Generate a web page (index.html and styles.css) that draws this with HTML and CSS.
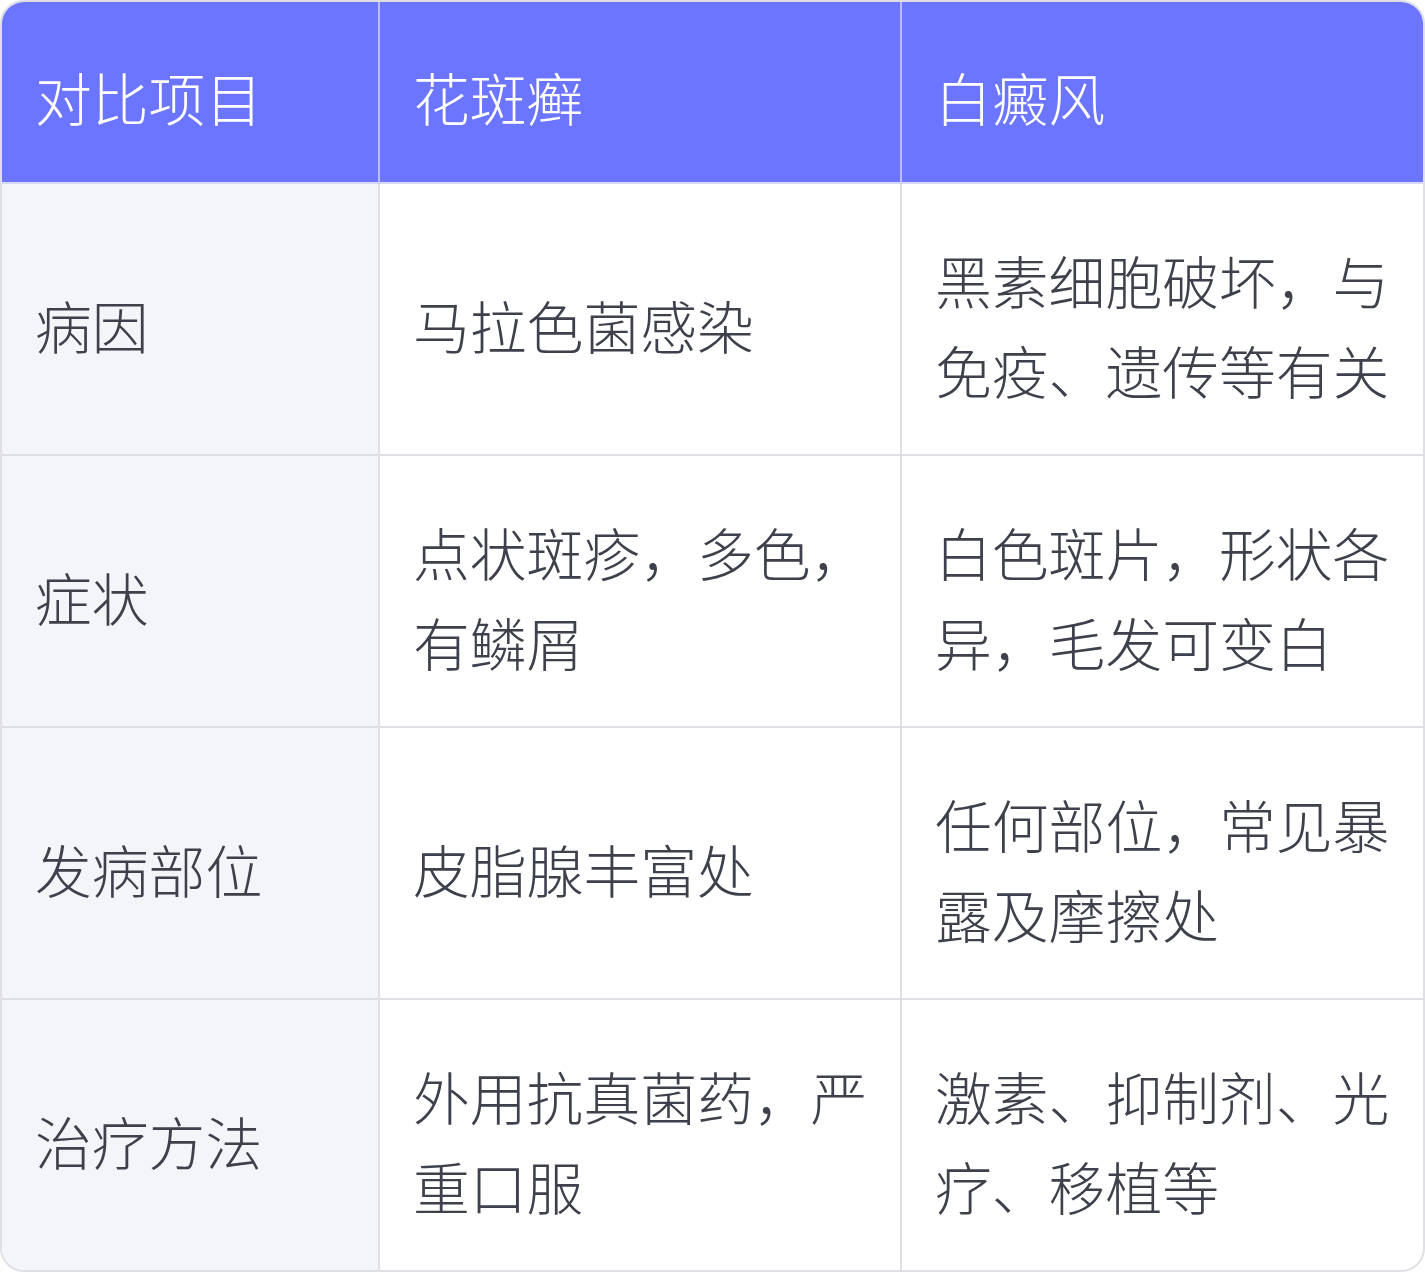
FILE: index.html
```html
<!DOCTYPE html>
<html lang="zh-CN">
<head>
<meta charset="utf-8">
<link rel="stylesheet" href="styles.css">
</head>
<body>
<table class="cmp">
  <colgroup>
    <col class="c1"><col class="c2"><col class="c3">
  </colgroup>
  <thead>
    <tr><th>对比项目</th><th>花斑癣</th><th>白癜风</th></tr>
  </thead>
  <tbody>
    <tr><td class="key">病因</td><td>马拉色菌感染</td><td>黑素细胞破坏，与免疫、遗传等有关</td></tr>
    <tr><td class="key">症状</td><td>点状斑疹，多色，有鳞屑</td><td>白色斑片，形状各异，毛发可变白</td></tr>
    <tr><td class="key">发病部位</td><td>皮脂腺丰富处</td><td>任何部位，常见暴露及摩擦处</td></tr>
    <tr><td class="key">治疗方法</td><td>外用抗真菌药，严重口服</td><td>激素、抑制剂、光疗、移植等</td></tr>
  </tbody>
</table>
</body>
</html>
```
FILE: styles.css
```css
html, body {
  margin: 0;
  padding: 0;
  background: #ffffff;
}
body {
  font-family: "Noto Sans CJK SC", "Noto Sans", sans-serif;
  font-weight: 300;
}
.cmp {
  width: 1425px;
  table-layout: fixed;
  border-collapse: separate;
  border-spacing: 0;
  border: 2px solid #dfdfe5;
  border-radius: 24px;
  overflow: hidden;
  font-size: 56.8px;
  line-height: 90px;
}
.c1 { width: 378px; }
.c2 { width: 522px; }
.c3 { width: 521px; }
.cmp th, .cmp td {
  text-align: left;
  vertical-align: middle;
  padding: 50px 28px 40px 33px;
  border-right: 2px solid #dfdfe5;
  border-bottom: 2px solid #dfdfe5;
  word-break: break-all;
}
.cmp th:last-child, .cmp td:last-child { border-right: none; }
.cmp tbody tr:last-child td { border-bottom: none; }
.cmp th {
  background: #6c75ff;
  color: #ffffff;
  font-weight: 300;
  border-right-color: #b9bdfb;
  border-bottom-color: #d6d8f5;
  height: 89px;
  padding-top: 49px;
  padding-bottom: 41px;
}
.cmp td {
  color: #3e404c;
  background: #ffffff;
  height: 180px;
}
.cmp td.key {
  background: #f4f5f9;
}
```
